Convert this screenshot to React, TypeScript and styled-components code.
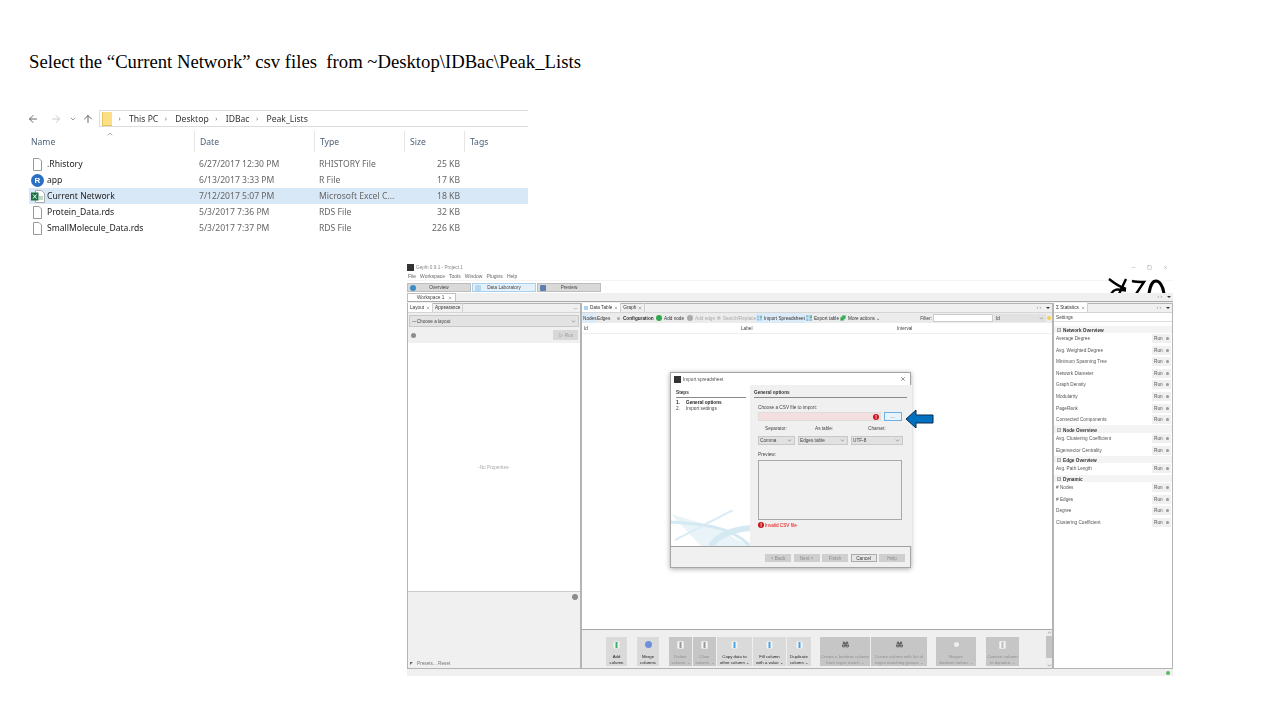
import React from 'react';
import styled, { createGlobalStyle } from 'styled-components';
import { ArrowLeft, ArrowRight, ArrowUp, ChevronDown, ChevronUp, Binoculars, Minus, Square, X, Play, Puzzle } from 'lucide-react';

const Global = createGlobalStyle`
  html, body { margin: 0; padding: 0; background: #fff; }
  * { box-sizing: border-box; }
`;

const Slide = styled.div`
  width: 1280px;
  height: 720px;
  overflow: hidden;
  background: #fff;
  display: flex;
  flex-direction: column;
`;

const Title = styled.h1`
  margin: 52px 0 0 29px;
  font: 400 18.7px/20px "Liberation Serif", serif;
  color: #000;
  white-space: pre;
`;

/* ---------- file explorer ---------- */

const Explorer = styled.div`
  width: 502px;
  height: 125px;
  margin: 38px 0 0 26px;
  font-family: "Noto Sans", sans-serif;
  font-size: 8.6px;
  color: #222;
  filter: blur(0.4px);
`;

const PathRow = styled.div`
  height: 17px;
  display: flex;
  align-items: center;
  color: #555;
`;

const NavSlot = styled.span<{ $w: number; $ml?: number; $c?: string }>`
  width: ${(p) => p.$w}px;
  margin-left: ${(p) => p.$ml || 0}px;
  display: flex;
  justify-content: center;
  color: ${(p) => p.$c || '#666'};
`;

const PathBox = styled.div`
  flex: 1;
  height: 17px;
  margin-left: 2px;
  border: 1px solid #dcdcdc;
  border-right: 0;
  display: flex;
  align-items: center;
  gap: 6.5px;
  padding-left: 2px;
  color: #222;
`;

const Crumb = styled.span`
  color: #333;
`;

const Sep = styled.span`
  width: 4px;
  color: #777;
  font-size: 7px;
`;

const Folder = styled.span`
  width: 10px;
  height: 14px;
  background: #fbdf85;
  border-left: 1px solid #e9c45c;
  border-bottom: 1px solid #e9c45c;
`;

const grid = `
  display: grid;
  grid-template-columns: 169px 120px 90px 60px 1fr;
`;

const HeadRow = styled.div`
  ${grid}
  height: 21px;
  margin-top: 4px;
  position: relative;
  color: #4c607a;
`;

const HeadCell = styled.div`
  display: flex;
  align-items: center;
  padding-left: 5px;
  border-right: 1px solid #e5e5e5;
  &:last-child { border-right: 0; }
`;

const SortCaret = styled.span`
  position: absolute;
  left: 80px;
  top: -1px;
  color: #888;
  display: flex;
`;

const FileList = styled.div`
  margin-top: 4px;
`;

const FileRow = styled.div<{ $on?: boolean }>`
  ${grid}
  height: 16px;
  margin-left: 3px;
  grid-template-columns: 166px 120px 90px 55px 1fr;
  align-items: center;
  background: ${(p) => (p.$on ? '#d9e8f7' : 'transparent')};
`;

const NameCell = styled.div`
  display: flex;
  align-items: center;
  gap: 2px;
  padding-left: 1px;
  color: #222;
`;

const IconBox = styled.span`
  width: 15px;
  display: flex;
  justify-content: center;
`;

const MetaCell = styled.div<{ $right?: boolean }>`
  padding-left: 4px;
  color: #666;
  text-align: ${(p) => (p.$right ? 'right' : 'left')};
`;

const RBadge = styled.span`
  width: 13px;
  height: 13px;
  border-radius: 50%;
  background: #2a6fc4;
  color: #fff;
  font: 700 8px/13px "Liberation Sans", sans-serif;
  text-align: center;
`;

const FileIcon = () => (
  <svg width="11" height="13" viewBox="0 0 11 13">
    <path d="M1.5.5h5.5l2.5 2.5v9.5h-8z" fill="#fff" stroke="#999" />
  </svg>
);

const ExcelIcon = () => (
  <svg width="14" height="13" viewBox="0 0 14 13">
    <path d="M4.5.5h6l3 3v9h-9z" fill="#fff" stroke="#aaa" />
    <rect x="8" y="6" width="4" height="4" fill="#bcd9c4" />
    <rect x="0" y="2.5" width="7.5" height="8" fill="#1d7044" />
    <path d="M2 4.5l3.5 4M5.5 4.5l-3.5 4" stroke="#fff" strokeWidth="1" />
  </svg>
);

const files = [
  { name: '.Rhistory', date: '6/27/2017 12:30 PM', type: 'RHISTORY File', size: '25 KB', icon: <FileIcon /> },
  { name: 'app', date: '6/13/2017 3:33 PM', type: 'R File', size: '17 KB', icon: <RBadge>R</RBadge> },
  { name: 'Current Network', date: '7/12/2017 5:07 PM', type: 'Microsoft Excel C...', size: '18 KB', icon: <ExcelIcon />, on: true },
  { name: 'Protein_Data.rds', date: '5/3/2017 7:36 PM', type: 'RDS File', size: '32 KB', icon: <FileIcon /> },
  { name: 'SmallMolecule_Data.rds', date: '5/3/2017 7:37 PM', type: 'RDS File', size: '226 KB', icon: <FileIcon /> },
];

/* ---------- gephi window ---------- */

const Gephi = styled.div`
  width: 766px;
  height: 413px;
  margin: 28px 0 0 407px;
  position: relative;
  display: flex;
  flex-direction: column;
  font-family: "Liberation Sans", sans-serif;
  font-size: 4.7px;
  color: #444;
  background: #fff;
  filter: blur(0.35px);
`;

const TitleBar = styled.div`
  height: 9px;
  display: flex;
  align-items: center;
  gap: 2px;
  color: #888;
  padding-right: 5px;
`;

const AppIcon = styled.span<{ $size?: number }>`
  width: ${(p) => p.$size || 7}px;
  height: ${(p) => p.$size || 7}px;
  background: #333;
  flex: none;
`;

const WinControls = styled.div`
  margin-left: auto;
  display: flex;
  gap: 11px;
  color: #999;
`;

const MenuBar = styled.div`
  height: 9px;
  display: flex;
  align-items: center;
  gap: 4px;
  padding-left: 1px;
  font-size: 5px;
  color: #666;
  border-bottom: 1px solid #f4f4f4;
`;

const PerspectiveBar = styled.div`
  height: 12px;
  display: flex;
  gap: 1px;
  align-items: center;
  padding-top: 1px;
`;

const Perspective = styled.div<{ $on?: boolean }>`
  width: 64px;
  height: 9px;
  display: flex;
  align-items: center;
  padding-left: 2px;
  background: ${(p) => (p.$on ? '#e4f1fb' : '#d9d9d9')};
  border: 1px solid ${(p) => (p.$on ? '#a8d0ee' : '#bdbdbd')};
  color: #444;
`;

const PerspectiveLabel = styled.span`
  flex: 1;
  text-align: center;
`;

const Globe = styled.span<{ $c: string }>`
  width: 6px;
  height: 6px;
  margin-right: -8px;
  border-radius: ${(p) => (p.$c === '#3b8cc4' ? '50%' : '1px')};
  background: ${(p) => p.$c};
`;

const Logo = styled.svg`
  position: absolute;
  left: 701px;
  top: 15px;
`;

const WorkspaceBar = styled.div`
  height: 9px;
  background: #f0f0f0;
  border-bottom: 1px solid #a9a9a9;
  display: flex;
  align-items: flex-end;
`;

const WorkTab = styled.div`
  height: 8px;
  padding: 0 3px 0 9px;
  display: flex;
  align-items: center;
  gap: 4px;
  background: #fff;
  border: 1px solid #c0c0c0;
  border-bottom: 0;
`;

const Main = styled.div`
  height: 367px;
  display: grid;
  grid-template-columns: 174px 472px 120px;
  background: #f0f0f0;
`;

const StatusBar = styled.div`
  flex: 1;
  background: #f0f0f0;
  display: flex;
  align-items: center;
  justify-content: flex-end;
  padding-right: 3px;
`;

const Pane = styled.div`
  display: flex;
  flex-direction: column;
  margin-top: 1px;
  border: 1px solid #b4b4b4;
  background: #f0f0f0;
  min-width: 0;
`;

const TabStrip = styled.div`
  height: 9px;
  display: flex;
  align-items: flex-end;
  background: #f0f0f0;
  border-bottom: 1px solid #d5d5d5;
`;

const PaneTab = styled.div<{ $on?: boolean }>`
  height: 9px;
  padding: 0 2px;
  display: flex;
  align-items: center;
  gap: 2px;
  color: #333;
  background: ${(p) => (p.$on ? '#fff' : 'transparent')};
  border-right: 1px solid #d0d0d0;
`;

const TabGlyph = styled.span`
  width: 4px;
  height: 4px;
  background: #a9d3ee;
`;

const TabTools = styled.div`
  margin-left: auto;
  margin-right: 2px;
  align-self: center;
  color: #888;
  display: flex;
  gap: 5px;
`;

const DropCaret = styled.span`
  width: 0;
  height: 0;
  border: 2px solid transparent;
  border-top: 2px solid #333;
  margin-top: 2px;
`;

const LayoutSelect = styled.div`
  height: 12px;
  margin: 2px 1px 0;
  padding: 0 2px;
  display: flex;
  align-items: center;
  justify-content: space-between;
  background: #e3e3e3;
  border: 1px solid #c8c8c8;
`;

const RunRow = styled.div`
  height: 16px;
  padding: 0 2px 0 3px;
  display: flex;
  align-items: center;
  justify-content: space-between;
`;

const Dot = styled.span<{ $size?: number; $c?: string }>`
  width: ${(p) => p.$size || 5}px;
  height: ${(p) => p.$size || 5}px;
  border-radius: 50%;
  background: ${(p) => p.$c || '#8c8c8c'};
  flex: none;
`;

const RunButton = styled.div`
  width: 25px;
  height: 10px;
  background: #d8d8d8;
  color: #999;
  display: flex;
  align-items: center;
  justify-content: center;
  gap: 2px;
`;

const Properties = styled.div`
  height: 249px;
  background: #fff;
  display: flex;
  align-items: center;
  justify-content: center;
  color: #aaa;
  border-bottom: 1px solid #ccc;
`;

const PaneBottom = styled.div`
  flex: 1;
  display: flex;
  flex-direction: column;
  justify-content: space-between;
  padding: 2px 2px 2px 2px;
  color: #777;
`;

const RightDot = styled.div`
  display: flex;
  justify-content: flex-end;
`;

const Presets = styled.div`
  display: flex;
  gap: 4px;
  align-items: center;
`;

const CornerMark = styled.span`
  width: 0;
  height: 0;
  border-top: 3px solid #666;
  border-right: 3px solid transparent;
`;

const Toolbar = styled.div`
  height: 10px;
  display: flex;
  align-items: center;
  background: #ececec;
  white-space: nowrap;
`;

const ToolItem = styled.span<{ $w: number; $off?: boolean; $bold?: boolean; $on?: boolean }>`
  width: ${(p) => p.$w}px;
  height: 10px;
  display: flex;
  align-items: center;
  gap: 2px;
  padding-left: 1px;
  flex: none;
  color: ${(p) => (p.$off ? '#aaa' : '#333')};
  font-weight: ${(p) => (p.$bold ? 700 : 400)};
  background: ${(p) => (p.$on ? '#dcebf8' : 'transparent')};
`;

const Filter = styled.div`
  margin-left: auto;
  display: flex;
  align-items: center;
  gap: 1px;
  margin-right: 1px;
`;

const FilterInput = styled.div`
  width: 60px;
  height: 8px;
  background: #fff;
  border: 1px solid #ccc;
`;

const FilterSelect = styled.div`
  width: 52px;
  height: 8px;
  padding: 0 2px;
  background: #e1e1e1;
  display: flex;
  align-items: center;
  justify-content: space-between;
`;

const TableHead = styled.div`
  height: 11px;
  display: grid;
  grid-template-columns: 157px 156px 1fr;
  align-items: center;
  background: #fff;
  border-bottom: 1px solid #f0f0f0;
  padding: 1px 0 0 2px;
`;

const TableBody = styled.div`
  height: 296px;
  background: #fff;
  border-bottom: 1px solid #a9a9a9;
`;

const ActionBar = styled.div`
  flex: 1;
  display: flex;
  align-items: flex-end;
  padding: 0 0 2px 24px;
  background: #efefef;
  position: relative;
`;

const ActionGroup = styled.div<{ $gap: number }>`
  display: flex;
  gap: 1px;
  margin-right: ${(p) => p.$gap}px;
`;

const Action = styled.div<{ $w: number; $off?: boolean; $dark?: boolean }>`
  width: ${(p) => p.$w}px;
  height: 29px;
  padding-top: 2px;
  display: flex;
  flex-direction: column;
  align-items: center;
  text-align: center;
  font-size: 4.3px;
  line-height: 5.6px;
  white-space: nowrap;
  background: ${(p) => (p.$dark ? '#c6c6c6' : '#dadada')};
  color: ${(p) => (p.$off ? '#8f8f8f' : '#222')};
`;

const ActionIcon = styled.span`
  height: 11px;
  display: flex;
  align-items: center;
  margin-bottom: 4px;
`;

const ScrollBar = styled.div`
  position: absolute;
  right: 0;
  top: 0;
  bottom: 0;
  width: 6px;
  background: #ececec;
  display: flex;
  flex-direction: column;
  align-items: center;
  justify-content: space-between;
  color: #555;
`;

const ScrollThumb = styled.div`
  width: 6px;
  height: 22px;
  background: #c4c4c4;
  margin-bottom: auto;
  margin-top: 1px;
`;

const StatsHead = styled.div`
  height: 9px;
  display: flex;
  align-items: center;
  background: #fff;
  padding-left: 2px;
  border-bottom: 1px solid #ddd;
`;

const StatsList = styled.div`
  flex: 1;
  background: #fff;
  padding-top: 3.5px;
`;

const Section = styled.div`
  height: 7.2px;
  padding: 2px 0 0 3px;
  display: flex;
  align-items: center;
  gap: 2px;
  background: #f4f4f4;
  font-weight: 700;
  color: #333;
`;

const Plus = styled.span`
  width: 4px;
  height: 4px;
  background: #ddd;
  border: 1px solid #aaa;
`;

const StatRow = styled.div`
  height: 11.6px;
  display: flex;
  align-items: center;
  padding-left: 2px;
  color: #555;
`;

const StatRun = styled.span`
  margin-left: auto;
  margin-right: 1px;
  width: 19px;
  height: 9px;
  padding: 0 2px;
  background: #f0f0f0;
  display: flex;
  align-items: center;
  justify-content: space-between;
`;

/* ---------- import dialog ---------- */

const Dialog = styled.div`
  position: absolute;
  left: 263px;
  top: 109px;
  width: 241px;
  height: 196px;
  background: #fff;
  border: 1px solid #a5a5a5;
  box-shadow: 0 1px 5px rgba(0, 0, 0, 0.35);
  display: flex;
  flex-direction: column;
`;

const DialogTitle = styled.div`
  height: 12px;
  display: flex;
  align-items: center;
  gap: 2px;
  padding: 0 4px 0 3px;
  color: #555;
`;

const DialogClose = styled.span`
  margin-left: auto;
  display: flex;
  color: #333;
`;

const DialogBody = styled.div`
  flex: 1;
  display: grid;
  grid-template-columns: 79px 1fr;
`;

const StepsCol = styled.div`
  position: relative;
  padding: 5px 4px 0 5px;
  overflow: hidden;
`;

const HeadLine = styled.div`
  font-weight: 700;
  color: #333;
  border-bottom: 1px solid #8a8a8a;
  line-height: 6px;
  padding-bottom: 1px;
  margin-bottom: 2px;
`;

const StepItem = styled.div<{ $on?: boolean }>`
  display: flex;
  line-height: 6px;
  font-weight: ${(p) => (p.$on ? 700 : 400)};
  color: ${(p) => (p.$on ? '#222' : '#444')};
`;

const StepNo = styled.span`
  width: 10px;
`;

const Watermark = styled.svg`
  position: absolute;
  left: 0;
  bottom: 0;
`;

const OptionsCol = styled.div`
  background: #f0f0f0;
  padding: 5px 5px 0 4px;
`;

const OptionsInner = styled.div`
  padding: 5px 4px 0 4px;
`;

const InputRow = styled.div`
  display: flex;
  gap: 3px;
  margin-top: 2px;
  align-items: center;
`;

const CsvInput = styled.div`
  width: 123px;
  height: 9px;
  background: #f3dfdf;
  border: 1px solid #ddd;
  display: flex;
  align-items: center;
  justify-content: flex-end;
  padding-right: 1px;
`;

const Browse = styled.div`
  width: 18px;
  height: 9px;
  background: #e8f3fc;
  border: 1px solid #6cb0e8;
  text-align: center;
  line-height: 7px;
`;

const Labels = styled.div`
  display: grid;
  grid-template-columns: 50px 53px 1fr;
  margin-top: 4px;
  padding-left: 7px;
  line-height: 7px;
`;

const Selects = styled.div`
  display: flex;
  gap: 3px;
  margin-top: 4px;
`;

const DialogSelect = styled.div<{ $w: number }>`
  width: ${(p) => p.$w}px;
  height: 9px;
  padding: 0 2px 0 1px;
  background: #e1e1e1;
  border: 1px solid #c8c8c8;
  display: flex;
  align-items: center;
  justify-content: space-between;
`;

const PreviewLabel = styled.div`
  margin-top: 7px;
  line-height: 6px;
`;

const PreviewBox = styled.div`
  width: 144px;
  height: 60px;
  margin-top: 2px;
  border: 1px solid #a8a8a8;
  background: #f0f0f0;
`;

const ErrorLine = styled.div`
  margin-top: 2px;
  display: flex;
  align-items: center;
  gap: 1px;
  color: #e00;
`;

const ErrorDot = styled.span`
  width: 6px;
  height: 6px;
  border-radius: 50%;
  background: #c8141e;
  color: #fff;
  font: 700 5px/6px "Liberation Sans", sans-serif;
  text-align: center;
`;

const DialogFoot = styled.div`
  height: 21px;
  padding: 2px 5px 0 0;
  background: #f0f0f0;
  border-top: 1px solid #a0a0a0;
  display: flex;
  align-items: center;
  justify-content: flex-end;
  gap: 2.5px;
`;

const FootButton = styled.div<{ $off?: boolean }>`
  width: 26px;
  height: 8px;
  line-height: 7px;
  text-align: center;
  background: ${(p) => (p.$off ? '#cfcfcf' : '#e6e6e6')};
  border: 1px solid ${(p) => (p.$off ? '#cfcfcf' : '#aaa')};
  color: ${(p) => (p.$off ? '#8c8c8c' : '#333')};
`;

const Arrow = styled.svg`
  position: absolute;
  left: 234px;
  top: 36px;
`;

const ColumnIcon = ({ c }: { c: string }) => (
  <svg width="7" height="8" viewBox="0 0 7 8">
    <rect width="7" height="8" fill="#f4f4f4" stroke="#bbb" strokeWidth=".5" />
    <rect x="2.5" y="1" width="2" height="6" fill={c} />
  </svg>
);

const SheetIcon = () => (
  <svg width="6" height="6" viewBox="0 0 6 6">
    <rect width="6" height="6" fill="#8fc4e8" />
    <path d="M0 3h6M3 0v6" stroke="#fff" strokeWidth=".6" />
    <path d="M3 3l3-3v3z" fill="#6dbb5e" />
  </svg>
);

const stats: { head: string; rows: string[] }[] = [
  {
    head: 'Network Overview',
    rows: ['Average Degree', 'Avg. Weighted Degree', 'Minimum Spanning Tree', 'Network Diameter', 'Graph Density', 'Modularity', 'PageRank', 'Connected Components'],
  },
  { head: 'Node Overview', rows: ['Avg. Clustering Coefficient', 'Eigenvector Centrality'] },
  { head: 'Edge Overview', rows: ['Avg. Path Length'] },
  { head: 'Dynamic', rows: ['# Nodes', '# Edges', 'Degree', 'Clustering Coefficient'] },
];

type Act = { l: [string, string]; w: number; off?: boolean; dark?: boolean; icon: React.ReactNode };

const actionGroups: { gap: number; items: Act[] }[] = [
  { gap: 10, items: [{ l: ['Add', 'column'], w: 21, icon: <ColumnIcon c="#35b56a" /> }] },
  { gap: 10, items: [{ l: ['Merge', 'columns'], w: 22, icon: <Dot $size={7} $c="#6f8fdc" /> }] },
  {
    gap: 9,
    items: [
      { l: ['Delete', 'column ⌄'], w: 23, off: true, dark: true, icon: <ColumnIcon c="#999" /> },
      { l: ['Clear', 'column ⌄'], w: 23, off: true, dark: true, icon: <ColumnIcon c="#999" /> },
      { l: ['Copy data to', 'other column ⌄'], w: 35, icon: <ColumnIcon c="#4aa3df" /> },
      { l: ['Fill column', 'with a value ⌄'], w: 33, icon: <ColumnIcon c="#4aa3df" /> },
      { l: ['Duplicate', 'column ⌄'], w: 24, icon: <ColumnIcon c="#4aa3df" /> },
    ],
  },
  {
    gap: 9,
    items: [
      { l: ['Create a boolean column', 'from regex match ⌄'], w: 50, off: true, dark: true, icon: <Binoculars size={7} color="#333" /> },
      { l: ['Create column with list of', 'regex matching groups ⌄'], w: 56, off: true, dark: true, icon: <Binoculars size={7} color="#333" /> },
    ],
  },
  { gap: 10, items: [{ l: ['Negate', 'boolean values ⌄'], w: 40, off: true, dark: true, icon: <Dot $size={5} $c="#eee" /> }] },
  { gap: 0, items: [{ l: ['Convert column', 'to dynamic ⌄'], w: 33, off: true, dark: true, icon: <ColumnIcon c="#bbb" /> }] },
];

export default function App() {
  return (
    <Slide>
      <Global />
      <Title>{'Select the “Current Network” csv files  from ~Desktop\\IDBac\\Peak_Lists'}</Title>

      <Explorer>
        <PathRow>
          <NavSlot $w={14}><ArrowLeft size={12} /></NavSlot>
          <NavSlot $w={22} $ml={5} $c="#ccc"><ArrowRight size={12} /></NavSlot>
          <NavSlot $w={12}><ChevronDown size={8} /></NavSlot>
          <NavSlot $w={18}><ArrowUp size={12} /></NavSlot>
          <PathBox>
            <Folder />
            <Sep>›</Sep><Crumb>This PC</Crumb>
            <Sep>›</Sep><Crumb>Desktop</Crumb>
            <Sep>›</Sep><Crumb>IDBac</Crumb>
            <Sep>›</Sep><Crumb>Peak_Lists</Crumb>
          </PathBox>
        </PathRow>
        <HeadRow>
          <SortCaret><ChevronUp size={8} /></SortCaret>
          <HeadCell>Name</HeadCell>
          <HeadCell>Date</HeadCell>
          <HeadCell>Type</HeadCell>
          <HeadCell>Size</HeadCell>
          <HeadCell>Tags</HeadCell>
        </HeadRow>
        <FileList>
          {files.map((f) => (
            <FileRow key={f.name} $on={f.on}>
              <NameCell><IconBox>{f.icon}</IconBox>{f.name}</NameCell>
              <MetaCell>{f.date}</MetaCell>
              <MetaCell>{f.type}</MetaCell>
              <MetaCell $right>{f.size}</MetaCell>
              <span />
            </FileRow>
          ))}
        </FileList>
      </Explorer>

      <Gephi>
        <TitleBar>
          <AppIcon />
          Gephi 0.9.1 - Project 1
          <WinControls>
            <Minus size={5} />
            <Square size={5} />
            <X size={5} />
          </WinControls>
        </TitleBar>
        <MenuBar>
          {['File', 'Workspace', 'Tools', 'Window', 'Plugins', 'Help'].map((m) => <span key={m}>{m}</span>)}
        </MenuBar>
        <PerspectiveBar>
          <Perspective><Globe $c="#3b8cc4" /><PerspectiveLabel>Overview</PerspectiveLabel></Perspective>
          <Perspective $on><Globe $c="#b5d8f0" /><PerspectiveLabel>Data Laboratory</PerspectiveLabel></Perspective>
          <Perspective><Globe $c="#5a7fb0" /><PerspectiveLabel>Preview</PerspectiveLabel></Perspective>
        </PerspectiveBar>
        <Logo width="58" height="15" viewBox="0 0 58 15" fill="none" stroke="#000" strokeWidth="2.4">
          <path d="M1 1C6 5 12 9 18 11" />
          <path d="M18 1L11 16" />
          <path d="M3 16C7 9 12 12 18 12.5" />
          <path d="M24 3C28 4 32 4 36 4L28 16" />
          <path d="M41 16C42 7 45 3 48 3C51 3 55 7 56 16" strokeWidth="3" />
        </Logo>
        <WorkspaceBar>
          <WorkTab>Workspace 1 <X size={4} /></WorkTab>
          <TabTools>‹ › <DropCaret /></TabTools>
        </WorkspaceBar>
        <Main>
          <Pane>
            <TabStrip>
              <PaneTab $on>Layout <X size={4} /></PaneTab>
              <PaneTab>Appearance</PaneTab>
              <TabTools><Minus size={5} /></TabTools>
            </TabStrip>
            <LayoutSelect>---Choose a layout<ChevronDown size={5} /></LayoutSelect>
            <RunRow>
              <Dot />
              <RunButton><Play size={5} />Run</RunButton>
            </RunRow>
            <Properties>-No Properties-</Properties>
            <PaneBottom>
              <RightDot><Dot $size={6} /></RightDot>
              <Presets><CornerMark />Presets...  Reset</Presets>
            </PaneBottom>
          </Pane>

          <Pane>
            <TabStrip>
              <PaneTab $on><TabGlyph />Data Table <X size={4} /></PaneTab>
              <PaneTab>Graph <X size={4} /></PaneTab>
              <TabTools>‹ › <DropCaret /></TabTools>
            </TabStrip>
            <Toolbar>
              <ToolItem $w={14} $on>Nodes</ToolItem>
              <ToolItem $w={15}>Edges</ToolItem>
              <ToolItem $w={44} $bold>&nbsp;&nbsp;<Dot $size={3} $c="#aaa" />&nbsp;Configuration</ToolItem>
              <ToolItem $w={31}><Dot $size={6} $c="#2fa84f" />Add node</ToolItem>
              <ToolItem $w={30} $off><Dot $size={6} $c="#aaa" />Add edge</ToolItem>
              <ToolItem $w={40} $off><Binoculars size={6} />Search/Replace</ToolItem>
              <ToolItem $w={49} $on><SheetIcon />Import Spreadsheet</ToolItem>
              <ToolItem $w={34}><SheetIcon />Export table</ToolItem>
              <ToolItem $w={42}><Puzzle size={6} color="#2fa84f" fill="#2fa84f" />More actions ⌄</ToolItem>
              <Filter>
                Filter:
                <FilterInput />
                <FilterSelect>Id<ChevronDown size={5} /></FilterSelect>
                <Dot $size={4} $c="#f2d24e" />
              </Filter>
            </Toolbar>
            <TableHead><span>Id</span><span>Label</span><span>Interval</span></TableHead>
            <TableBody />
            <ActionBar>
              {actionGroups.map((g, i) => (
                <ActionGroup key={i} $gap={g.gap}>
                  {g.items.map((a) => (
                    <Action key={a.l[0]} $w={a.w} $off={a.off} $dark={a.dark}>
                      <ActionIcon>{a.icon}</ActionIcon>
                      <span>{a.l[0]}</span>
                      <span>{a.l[1]}</span>
                    </Action>
                  ))}
                </ActionGroup>
              ))}
              <ScrollBar>
                <ChevronUp size={5} />
                <ScrollThumb />
                <ChevronDown size={5} />
              </ScrollBar>
            </ActionBar>
          </Pane>

          <Pane>
            <TabStrip>
              <PaneTab $on>Σ Statistics <X size={4} /></PaneTab>
              <TabTools>‹ › <DropCaret /></TabTools>
            </TabStrip>
            <StatsHead>Settings</StatsHead>
            <StatsList>
              {stats.map((s) => (
                <div key={s.head}>
                  <Section><Plus />{s.head}</Section>
                  {s.rows.map((r) => (
                    <StatRow key={r}>{r}<StatRun>Run<Dot $size={3} $c="#999" /></StatRun></StatRow>
                  ))}
                </div>
              ))}
            </StatsList>
          </Pane>
        </Main>
        <StatusBar><Dot $size={4} $c="#5cb85c" /></StatusBar>

        <Dialog>
          <DialogTitle>
            <AppIcon />
            Import spreadsheet
            <DialogClose><X size={6} /></DialogClose>
          </DialogTitle>
          <DialogBody>
            <StepsCol>
              <HeadLine>Steps</HeadLine>
              <StepItem $on><StepNo>1.</StepNo>General options</StepItem>
              <StepItem><StepNo>2.</StepNo>Import settings</StepItem>
              <Watermark width="79" height="36" viewBox="0 0 79 36" fill="none">
                <path d="M0 4l40 12 39 20H30z" fill="#e9f4f9" />
                <path d="M4 30L62 0" stroke="#dcecf4" strokeWidth="2" />
                <path d="M0 12c30 2 60 4 79 24" stroke="#d5e9f2" strokeWidth="3" />
                <path d="M40 36c6-10 20-16 39-18" stroke="#d5e9f2" strokeWidth="6" />
              </Watermark>
            </StepsCol>
            <OptionsCol>
              <HeadLine>General options</HeadLine>
              <OptionsInner>
                Choose a CSV file to import:
                <InputRow>
                  <CsvInput><ErrorDot>!</ErrorDot></CsvInput>
                  <Browse>...</Browse>
                </InputRow>
                <Labels><span>Separator:</span><span>As table:</span><span>Charset:</span></Labels>
                <Selects>
                  <DialogSelect $w={37}>Comma<ChevronDown size={5} /></DialogSelect>
                  <DialogSelect $w={50}>Edges table<ChevronDown size={5} /></DialogSelect>
                  <DialogSelect $w={52}>UTF-8<ChevronDown size={5} /></DialogSelect>
                </Selects>
                <PreviewLabel>Preview:</PreviewLabel>
                <PreviewBox />
                <ErrorLine><ErrorDot>!</ErrorDot>Invalid CSV file</ErrorLine>
              </OptionsInner>
            </OptionsCol>
          </DialogBody>
          <DialogFoot>
            <FootButton $off>&lt; Back</FootButton>
            <FootButton $off>Next &gt;</FootButton>
            <FootButton $off>Finish</FootButton>
            <FootButton>Cancel</FootButton>
            <FootButton $off>Help</FootButton>
          </DialogFoot>
          <Arrow width="29" height="20" viewBox="0 0 29 20">
            <path d="M1 10L11 1v5h17v8H11v5z" fill="#0070c0" stroke="#0b2a4a" strokeWidth="1" />
          </Arrow>
        </Dialog>
      </Gephi>
    </Slide>
  );
}
